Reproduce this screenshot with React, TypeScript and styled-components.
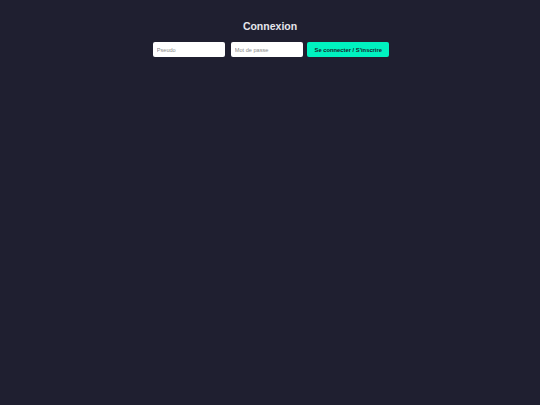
import styled, { createGlobalStyle } from "styled-components"

const GlobalStyle = createGlobalStyle`
  html, body {
    margin: 0;
    padding: 0;
    background: #1f1f30;
    font-family: "Liberation Sans", Arial, sans-serif;
  }
`

const Page = styled.div`
  min-height: 405px;
  display: flex;
  flex-direction: column;
  align-items: center;
  padding-top: 19px;
  box-sizing: border-box;
`

const Title = styled.h1`
  margin: 0;
  color: #e6e6ec;
  font-size: 10.5px;
  font-weight: 700;
  line-height: 14px;
`

const Form = styled.form`
  margin-top: 9px;
  margin-left: 2px;
  display: flex;
  gap: 6px;
`

const Field = styled.input`
  width: 72px;
  height: 15px;
  box-sizing: border-box;
  border: none;
  border-radius: 2px;
  background: #ffffff;
  padding: 0 4px;
  font-family: inherit;
  font-size: 5.6px;
  color: #333;
  outline: none;

  &::placeholder {
    color: #8a8a8a;
  }
`

const SubmitButton = styled.button`
  width: 82px;
  height: 15px;
  margin-left: -1.5px;
  box-sizing: border-box;
  border: none;
  border-radius: 2px;
  background: #00f2c0;
  color: #1a1a2a;
  font-family: inherit;
  font-size: 5.8px;
  font-weight: 700;
  padding: 0;
  cursor: pointer;
`

const App = () => {
  return (
    <>
      <GlobalStyle />
      <Page>
        <Title>Connexion</Title>
        <Form onSubmit={(e) => e.preventDefault()}>
          <Field type="text" placeholder="Pseudo" />
          <Field type="password" placeholder="Mot de passe" />
          <SubmitButton type="submit">Se connecter / S'inscrire</SubmitButton>
        </Form>
      </Page>
    </>
  )
}

export default App
